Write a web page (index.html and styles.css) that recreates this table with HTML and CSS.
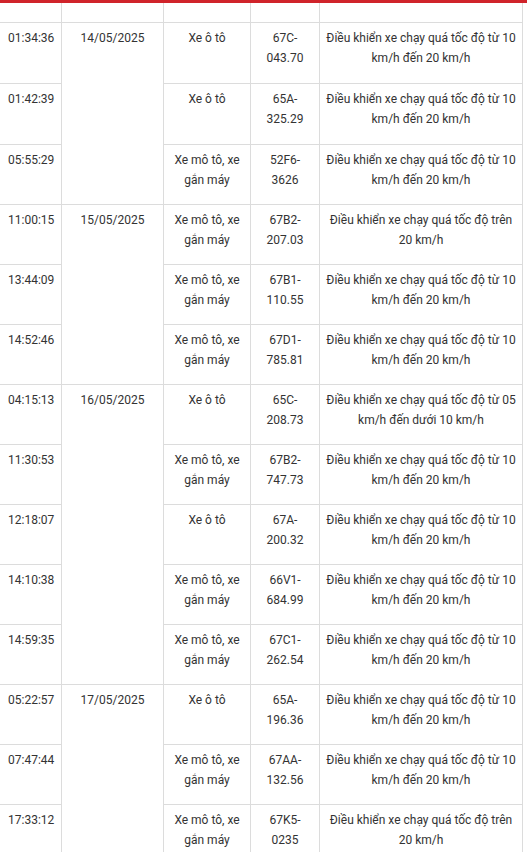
FILE: index.html
```html
<!DOCTYPE html>
<html lang="vi">
<head>
<meta charset="utf-8">
<link rel="stylesheet" href="styles.css">
</head>
<body>
<div class="topbar"></div>
<table class="violations">
  <colgroup>
    <col class="c-time"><col class="c-date"><col class="c-type"><col class="c-plate"><col class="c-desc">
  </colgroup>
  <tbody>
    <tr class="blank"><td></td><td></td><td></td><td></td><td></td></tr>
    <tr class="tall"><td class="time">01:34:36</td><td class="date" rowspan="3">14/05/2025</td><td>Xe ô tô</td><td>67C-043.70</td><td>Điều khiển xe chạy quá tốc độ từ 10 km/h đến 20 km/h</td></tr>
    <tr class="tall"><td class="time">01:42:39</td><td>Xe ô tô</td><td>65A-325.29</td><td>Điều khiển xe chạy quá tốc độ từ 10 km/h đến 20 km/h</td></tr>
    <tr><td class="time">05:55:29</td><td>Xe mô tô, xe gắn máy</td><td>52F6-3626</td><td>Điều khiển xe chạy quá tốc độ từ 10 km/h đến 20 km/h</td></tr>
    <tr><td class="time">11:00:15</td><td class="date" rowspan="3">15/05/2025</td><td>Xe mô tô, xe gắn máy</td><td>67B2-207.03</td><td>Điều khiển xe chạy quá tốc độ trên 20 km/h</td></tr>
    <tr><td class="time">13:44:09</td><td>Xe mô tô, xe gắn máy</td><td>67B1-110.55</td><td>Điều khiển xe chạy quá tốc độ từ 10 km/h đến 20 km/h</td></tr>
    <tr><td class="time">14:52:46</td><td>Xe mô tô, xe gắn máy</td><td>67D1-785.81</td><td>Điều khiển xe chạy quá tốc độ từ 10 km/h đến 20 km/h</td></tr>
    <tr><td class="time">04:15:13</td><td class="date" rowspan="5">16/05/2025</td><td>Xe ô tô</td><td>65C-208.73</td><td>Điều khiển xe chạy quá tốc độ từ 05 km/h đến dưới 10 km/h</td></tr>
    <tr><td class="time">11:30:53</td><td>Xe mô tô, xe gắn máy</td><td>67B2-747.73</td><td>Điều khiển xe chạy quá tốc độ từ 10 km/h đến 20 km/h</td></tr>
    <tr><td class="time">12:18:07</td><td>Xe ô tô</td><td>67A-200.32</td><td>Điều khiển xe chạy quá tốc độ từ 10 km/h đến 20 km/h</td></tr>
    <tr><td class="time">14:10:38</td><td>Xe mô tô, xe gắn máy</td><td>66V1-684.99</td><td>Điều khiển xe chạy quá tốc độ từ 10 km/h đến 20 km/h</td></tr>
    <tr><td class="time">14:59:35</td><td>Xe mô tô, xe gắn máy</td><td>67C1-262.54</td><td>Điều khiển xe chạy quá tốc độ từ 10 km/h đến 20 km/h</td></tr>
    <tr><td class="time">05:22:57</td><td class="date" rowspan="3">17/05/2025</td><td>Xe ô tô</td><td>65A-196.36</td><td>Điều khiển xe chạy quá tốc độ từ 10 km/h đến 20 km/h</td></tr>
    <tr><td class="time">07:47:44</td><td>Xe mô tô, xe gắn máy</td><td>67AA-132.56</td><td>Điều khiển xe chạy quá tốc độ từ 10 km/h đến 20 km/h</td></tr>
    <tr><td class="time">17:33:12</td><td>Xe mô tô, xe gắn máy</td><td>67K5-0235</td><td>Điều khiển xe chạy quá tốc độ trên 20 km/h</td></tr>
  </tbody>
</table>
</body>
</html>
```
FILE: styles.css
```css
html, body {
  margin: 0;
  padding: 0;
  background: #fff;
}
body {
  font-family: Roboto, "Noto Sans", "Liberation Sans", sans-serif;
  font-size: 12px;
  line-height: 20px;
  color: #333;
  overflow: hidden;
}
.topbar {
  height: 3px;
  background: #d0232a;
}
.violations {
  border-collapse: collapse;
  table-layout: fixed;
  width: 524px;
  margin-left: -1px;
}
.c-time { width: 62px; }
.c-date { width: 102px; }
.c-type { width: 87px; }
.c-plate { width: 69px; }
.c-desc { width: 203px; }
.violations td {
  border: 1px solid #dcdcdc;
  padding: 5px 6px 0;
  vertical-align: top;
  text-align: center;
  height: 60px;
  box-sizing: border-box;
}
.violations tr.tall td {
  height: 61px;
}
.violations tr.blank td {
  border-top: none;
  height: 19px;
  padding: 0;
}
.violations td.time {
  text-align: left;
  padding-left: 8px;
  padding-right: 0;
}
```
